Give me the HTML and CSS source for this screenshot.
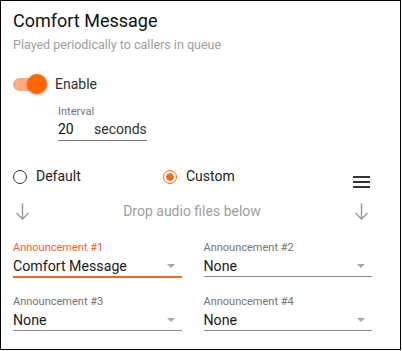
FILE: index.html
```html
<html lang="en">
<head>
  <title>Comfort Message</title>
  <link rel="stylesheet" href="styles.css">
</head>
<body>
<div class="card">
  <h1 class="title">Comfort Message</h1>
  <p class="subtitle">Played periodically to callers in queue</p>

  <div class="toggle-row">
    <span class="switch"><span class="track"></span><span class="thumb"></span></span>
    <span class="toggle-label">Enable</span>
  </div>

  <div class="interval">
    <div class="small-label">Interval</div>
    <div class="interval-input">
      <span class="interval-value">20</span>
      <span class="interval-unit">seconds</span>
    </div>
  </div>

  <div class="mode-row">
    <label class="radio radio-default"><span class="circle"></span>Default</label>
    <label class="radio"><span class="circle checked"></span>Custom</label>
    <svg class="menu" width="17" height="12" viewBox="0 0 17 12">
      <rect x="0" y="0" width="17" height="2" fill="#333"/>
      <rect x="0" y="5" width="17" height="2" fill="#333"/>
      <rect x="0" y="10" width="17" height="2" fill="#333"/>
    </svg>
  </div>

  <div class="drop-row">
    <svg class="arrow arrow-left" width="15" height="17" viewBox="0 0 15 17">
      <path d="M7.5 0.5V16M1.5 10L7.5 16L13.5 10" fill="none" stroke="#9e9e9e" stroke-width="1.5"/>
    </svg>
    <span class="drop-text">Drop audio files below</span>
    <svg class="arrow arrow-right" width="15" height="17" viewBox="0 0 15 17">
      <path d="M7.5 0.5V16M1.5 10L7.5 16L13.5 10" fill="none" stroke="#9e9e9e" stroke-width="1.5"/>
    </svg>
  </div>

  <div class="fields">
    <div class="field focused">
      <div class="small-label">Announcement #1</div>
      <div class="select"><span>Comfort Message</span><span class="caret"></span></div>
    </div>
    <div class="field">
      <div class="small-label">Announcement #2</div>
      <div class="select"><span>None</span><span class="caret"></span></div>
    </div>
    <div class="field">
      <div class="small-label">Announcement #3</div>
      <div class="select"><span>None</span><span class="caret"></span></div>
    </div>
    <div class="field">
      <div class="small-label">Announcement #4</div>
      <div class="select"><span>None</span><span class="caret"></span></div>
    </div>
  </div>
</div>
</body>
</html>
```

FILE: styles.css
```css
html, body {
    margin: 0;
    padding: 0;
}

body {
    font-family: Roboto, "Liberation Sans", sans-serif;
    color: #212121;
    background: #fff;
}

.card {
    box-sizing: border-box;
    width: 401px;
    height: 350px;
    border: 1px solid #000;
    padding: 8px 28px 0 12px;
}

.title {
    margin: 0;
    font-size: 18px;
    font-weight: 400;
    line-height: 24px;
    color: #111;
}

.subtitle {
    margin: 4px 0 0;
    font-size: 12.5px;
    line-height: 16px;
    color: #9e9e9e;
}

.toggle-row {
    display: flex;
    align-items: center;
    height: 20px;
    margin-top: 21px;
}

.switch {
    position: relative;
    width: 34px;
    height: 20px;
}

.track {
    position: absolute;
    left: 0;
    top: 4px;
    width: 30px;
    height: 13px;
    border-radius: 7px;
    background: #ffab7d;
}

.thumb {
    position: absolute;
    left: 14px;
    top: 0;
    width: 20px;
    height: 20px;
    border-radius: 50%;
    background: #ff6600;
    box-shadow: 0 1px 3px rgba(0, 0, 0, .35);
}

.toggle-label {
    margin-left: 8px;
    font-size: 14px;
    line-height: 20px;
    color: #333;
}

.interval {
    width: 89px;
    margin: 11px 0 0 45px;
}

.small-label {
    font-size: 11px;
    line-height: 13px;
    color: #757575;
}

.interval-input {
    display: flex;
    margin-top: 1px;
    padding-bottom: 1px;
    border-bottom: 1px solid #777;
    font-size: 14px;
    line-height: 20px;
}

.interval-value {
    width: 36px;
    color: #111;
}

.interval-unit {
    color: #333;
}

.mode-row {
    display: flex;
    align-items: flex-start;
    height: 20px;
    margin-top: 25px;
    font-size: 14px;
    line-height: 20px;
    color: #222;
}

.radio {
    display: flex;
    align-items: center;
    gap: 9px;
}

.radio-default {
    width: 150px;
}

.circle {
    box-sizing: border-box;
    width: 14px;
    height: 14px;
    margin-top: 2px;
    border: 1.5px solid #333;
    border-radius: 50%;
}

.circle.checked {
    border-color: #ff6a13;
    background: radial-gradient(circle, #ff6a13 0 3.5px, transparent 4px);
}

.menu {
    margin: 10px 2px 0 auto;
}

.drop-row {
    display: flex;
    align-items: center;
    height: 17px;
    margin-top: 17px;
}

.arrow-left {
    margin-left: 2px;
}

.arrow-right {
    margin-right: 3px;
}

.drop-text {
    flex: 1;
    text-align: center;
    font-size: 14px;
    line-height: 17px;
    color: #9e9e9e;
}

.fields {
    display: grid;
    grid-template-columns: 1fr 1fr;
    column-gap: 22px;
    row-gap: 18px;
    margin-top: 21px;
}

.select {
    display: flex;
    align-items: center;
    justify-content: space-between;
    margin-top: 2px;
    padding-bottom: 0;
    border-bottom: 1px solid #8a8a8a;
    font-size: 14.2px;
    line-height: 20px;
    color: #1a1a1a;
}

.caret {
    width: 0;
    height: 0;
    margin-right: 7px;
    border-left: 4px solid transparent;
    border-right: 4px solid transparent;
    border-top: 4px solid #a8a8a8;
}

.focused .small-label {
    color: #ff5a2a;
}

.focused .select {
    border-bottom-color: #f26b1d;
    box-shadow: 0 1px 0 #f26b1d;
}
```
